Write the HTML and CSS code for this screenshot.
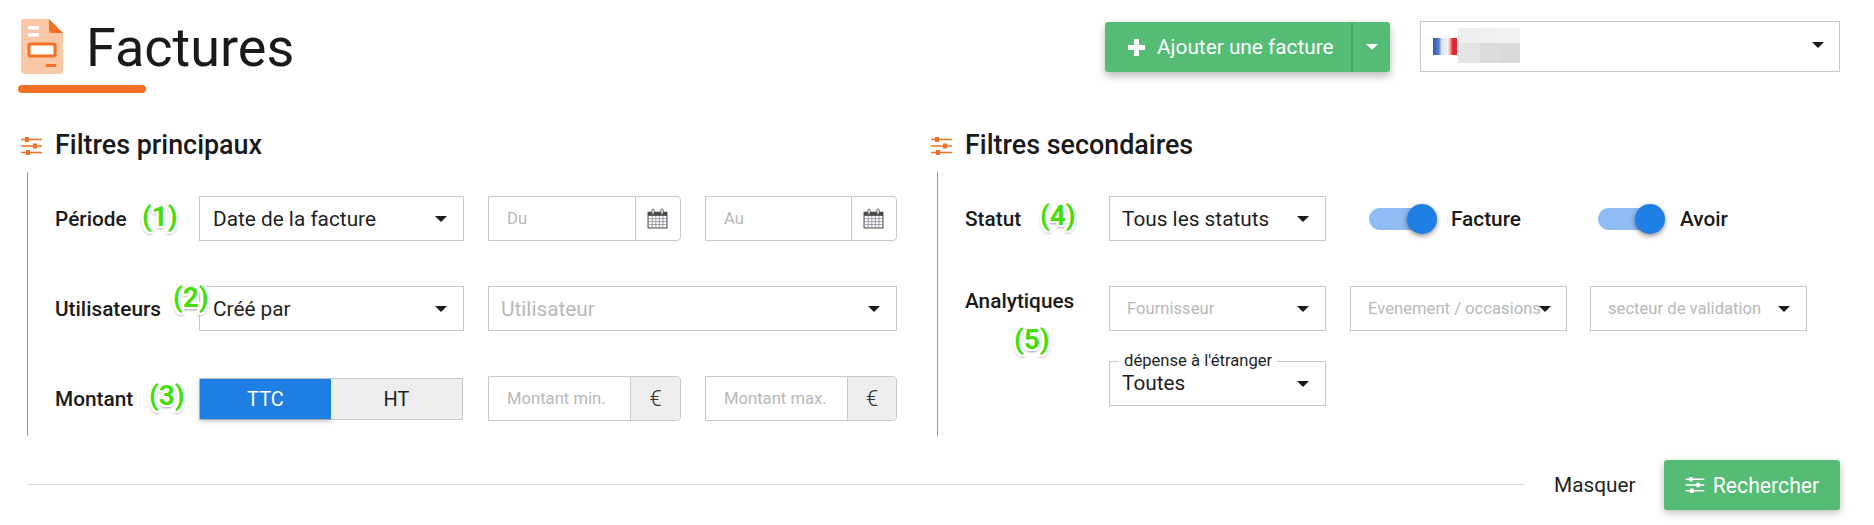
FILE: index.html
```html
<!DOCTYPE html>
<html lang="fr">
<head>
<meta charset="utf-8">
<title>Factures</title>
<link rel="stylesheet" href="styles.css">
</head>
<body>
<svg class="defs" width="0" height="0" aria-hidden="true">
  <defs>
    <symbol id="sliders" viewBox="0 0 21 18">
      <path d="M0 2.5h21M0 9h21M0 15.5h21" stroke="currentColor" stroke-width="1.5" fill="none"/>
      <rect x="4" y="0" width="4" height="5"/>
      <rect x="12" y="6.5" width="4" height="5"/>
      <rect x="5" y="13" width="4" height="5"/>
    </symbol>
    <symbol id="calendar" viewBox="0 0 20 20">
      <path d="M1 3.5h18a.5.5 0 0 1 .5.5v15a.5.5 0 0 1-.5.5H1a.5.5 0 0 1-.5-.5V4a.5.5 0 0 1 .5-.5z" fill="#4a4a4a"/>
      <rect x="1.5" y="7.5" width="17" height="11" fill="#fff"/>
      <path d="M1.5 10.2h17M1.5 13h17M1.5 15.8h17M5 7.5v11M8.4 7.5v11M11.8 7.5v11M15.2 7.5v11" stroke="#8a8f9c" stroke-width=".8" fill="none"/>
      <rect x="4.6" y="1" width="2.2" height="5" rx="1.1" fill="#fff" stroke="#4a4a4a" stroke-width=".8"/>
      <rect x="13.2" y="1" width="2.2" height="5" rx="1.1" fill="#fff" stroke="#4a4a4a" stroke-width=".8"/>
    </symbol>
  </defs>
</svg>

<header class="top">
  <div class="brand">
    <div class="brand-row">
      <svg class="doc" viewBox="0 0 42 55" aria-hidden="true">
        <path d="M3 0h25l14 14v37a4 4 0 0 1-4 4H4a4 4 0 0 1-4-4V3a3 3 0 0 1 3-3z" fill="#fac7a7"/>
        <path d="M28 0l14 14H31a3 3 0 0 1-3-3z" fill="#f37124"/>
        <rect x="7" y="7" width="11" height="3.5" rx=".5" fill="#fff"/>
        <rect x="7" y="14" width="11" height="3.5" rx=".5" fill="#fff"/>
        <rect x="8" y="25" width="26" height="12" rx="1.5" fill="#fff" stroke="#f37124" stroke-width="3"/>
        <rect x="25" y="45" width="10" height="3" fill="#f37124"/>
      </svg>
      <h1 class="title">Factures</h1>
    </div>
    <div class="brand-bar"></div>
  </div>
  <div class="top-actions">
    <div class="btn-group">
      <button class="btn btn-main" type="button"><span class="plus"></span>Ajouter une facture</button>
      <button class="btn btn-caret" type="button"><span class="caret caret-white"></span></button>
    </div>
    <div class="company">
      <span class="flag"></span>
      <svg class="redacted" viewBox="0 0 62 35" preserveAspectRatio="none" aria-hidden="true">
        <rect width="22" height="15" fill="#eeeeee"/>
        <rect x="22" width="20" height="15" fill="#f0f1f1"/>
        <rect x="42" width="20" height="15" fill="#f1f2f2"/>
        <rect y="15" width="22" height="20" fill="#e4e4e4"/>
        <rect x="22" y="15" width="20" height="20" fill="#dcdcdc"/>
        <rect x="42" y="15" width="20" height="20" fill="#dadada"/>
      </svg>
      <span class="caret company-caret"></span>
    </div>
  </div>
</header>

<main class="filters">
  <section class="panel panel-left">
    <h2 class="panel-title"><svg class="sliders" aria-hidden="true"><use href="#sliders"/></svg>Filtres principaux</h2>
    <div class="panel-body">
      <div class="row">
        <div class="label">Période<span class="mark mark-1">(1)</span></div>
        <div class="select w-select"><span>Date de la facture</span><span class="caret"></span></div>
        <div class="input-group w-input">
          <span class="ph">Du</span>
          <span class="addon"><svg class="cal" aria-hidden="true"><use href="#calendar"/></svg></span>
        </div>
        <div class="input-group w-input">
          <span class="ph">Au</span>
          <span class="addon"><svg class="cal" aria-hidden="true"><use href="#calendar"/></svg></span>
        </div>
      </div>
      <div class="row">
        <div class="label">Utilisateurs<span class="mark mark-2">(2)</span></div>
        <div class="select w-select"><span>Créé par</span><span class="caret"></span></div>
        <div class="select w-wide"><span class="ph-big">Utilisateur</span><span class="caret"></span></div>
      </div>
      <div class="row">
        <div class="label">Montant<span class="mark mark-3">(3)</span></div>
        <div class="segmented w-select">
          <span class="seg seg-on">TTC</span>
          <span class="seg">HT</span>
        </div>
        <div class="input-group w-input">
          <span class="ph">Montant min.</span>
          <span class="addon addon-grey">€</span>
        </div>
        <div class="input-group w-input">
          <span class="ph">Montant max.</span>
          <span class="addon addon-grey">€</span>
        </div>
      </div>
    </div>
  </section>

  <section class="panel panel-right">
    <h2 class="panel-title"><svg class="sliders" aria-hidden="true"><use href="#sliders"/></svg>Filtres secondaires</h2>
    <div class="panel-body">
      <div class="row">
        <div class="label">Statut<span class="mark mark-4">(4)</span></div>
        <div class="select w-select text-select"><span>Tous les statuts</span><span class="caret"></span></div>
        <div class="toggle toggle-a"><span class="track"><span class="knob"></span></span><span class="toggle-label">Facture</span></div>
        <div class="toggle toggle-b"><span class="track"><span class="knob"></span></span><span class="toggle-label">Avoir</span></div>
      </div>
      <div class="row row-top">
        <div class="label label-top">Analytiques<span class="mark mark-5">(5)</span></div>
        <div class="wrap">
          <div class="select w-select ph-select"><span class="ph-small">Fournisseur</span><span class="caret"></span></div>
          <div class="select w-select ph-select tight"><span class="ph-small">Evenement / occasions</span><span class="caret"></span></div>
          <div class="select w-select ph-select"><span class="ph-small">secteur de validation</span><span class="caret"></span></div>
          <div class="select w-select text-select legend-select">
            <span class="legend">dépense à l'étranger</span>
            <span class="legend-value">Toutes</span><span class="caret"></span>
          </div>
        </div>
      </div>
    </div>
  </section>
</main>

<footer class="foot">
  <div class="rule"></div>
  <span class="hide-link">Masquer</span>
  <button class="btn btn-search" type="button"><svg class="sliders sliders-white" aria-hidden="true"><use href="#sliders"/></svg>Rechercher</button>
</footer>
</body>
</html>
```
FILE: styles.css
```css
* { box-sizing: border-box; }
html, body { margin: 0; padding: 0; }
body {
  width: 1874px;
  height: 525px;
  overflow: hidden;
  background: #fff;
  color: #1a1a1a;
  font-family: Roboto, "Liberation Sans", sans-serif;
  font-size: 20.8px;
  position: relative;
}
.defs { position: absolute; }

/* Header */
.top {
  display: flex;
  justify-content: space-between;
  padding: 19px 34px 0 18px;
  height: 93px;
}
.brand { display: flex; flex-direction: column; }
.brand-row { display: flex; align-items: flex-start; padding-left: 3px; height: 66px; }
.doc { width: 42px; height: 55px; flex: none; }
.title {
  margin: -3px 0 0 23px;
  font-size: 54px;
  font-weight: 400;
  line-height: 64px;
  color: #1a1a1a;
}
.brand-bar { width: 128px; height: 8px; border-radius: 4px; background: #f37124; }
.top-actions { display: flex; gap: 30px; padding-top: 2px; align-items: flex-start; }

.btn {
  border: 0;
  color: #fff;
  background: #55bc76;
  font-family: inherit;
  cursor: pointer;
}
.btn-group {
  display: flex;
  height: 50px;
  margin-top: 1px;
  border-radius: 3px;
  box-shadow: 0 4px 8px rgba(0,0,0,.28);
}
.btn-main {
  width: 248px;
  padding: 0 0 0 23px;
  display: flex;
  align-items: center;
  font-size: 20.8px;
  border-radius: 3px 0 0 3px;
  border-right: 2px solid #4ba96a;
  white-space: nowrap;
}
.btn-caret { width: 37px; padding: 0; display: flex; align-items: center; justify-content: center; border-radius: 0 3px 3px 0; }
.plus {
  width: 17px;
  height: 17px;
  margin-right: 12px;
  flex: none;
  background:
    linear-gradient(#fff,#fff) center / 17px 5px no-repeat,
    linear-gradient(#fff,#fff) center / 5px 17px no-repeat;
  border-radius: 1px;
}
.caret {
  width: 0;
  height: 0;
  flex: none;
  border-left: 6px solid transparent;
  border-right: 6px solid transparent;
  border-top: 6px solid #1a1a1a;
}
.caret-white { border-top-color: #fff; }

.company {
  width: 420px;
  height: 51px;
  border: 1px solid #c8c8c8;
  display: flex;
  align-items: center;
  padding: 0 15px 0 12px;
}
.flag {
  width: 24px;
  height: 17px;
  flex: none;
  margin-top: -1px;
  background: linear-gradient(90deg, #2f58b4 0, #5b80cc 25%, #dfe3ee 36%, #f2f2f2 62%, #f2b4b4 70%, #e3262a 82%);
}
.redacted { width: 62px; height: 35px; margin: -3px 0 0 1px; flex: none; }
.company-caret { margin-left: auto; margin-top: -4px; }

/* Panels */
.filters { display: grid; grid-template-columns: 910px 1fr; padding: 0 0 0 21px; height: 343px; }
.panel-title {
  margin: 0;
  padding-top: 36px;
  height: 79px;
  display: flex;
  align-items: flex-start;
  font-size: 26.9px;
  font-weight: 500;
  line-height: 32px;
  color: #1a1a1a;
}
.sliders {
  width: 21px;
  height: 18px;
  margin: 8px 13px 0 0;
  flex: none;
  color: #f37124;
  fill: #f37124;
}
.panel-body {
  margin-left: 6px;
  border-left: 1px solid #e8793c;
  padding-left: 27px;
  padding-top: 24px;
  height: 264px;
}
.row { display: flex; align-items: center; height: 45px; margin-bottom: 45px; }
.row:last-child { margin-bottom: 0; }
.row-top { align-items: flex-start; }
.label {
  width: 144px;
  flex: none;
  font-size: 20.8px;
  font-weight: 500;
  position: relative;
  line-height: 24px;
}
.label-top { padding-top: 3px; }

.mark {
  position: absolute;
  z-index: 2;
  font-size: 28px;
  font-weight: 700;
  line-height: 36px;
  color: #44de0d;
  text-shadow:
    2px 0 0 #fff, -2px 0 0 #fff, 0 2px 0 #fff, 0 -2px 0 #fff,
    2px 2px 0 #fff, -2px 2px 0 #fff, 2px -2px 0 #fff, -2px -2px 0 #fff,
    0 3px 2px #bbb, 2px 3px 2px #ccc, -2px 3px 2px #ccc;
  white-space: nowrap;
}
.mark-1 { left: 87px; top: -8px; }
.mark-2 { left: 118px; top: -17px; }
.mark-3 { left: 94px; top: -9px; }
.mark-4 { left: 75px; top: -9px; }
.mark-5 { left: 49px; top: 36px; }

.select {
  height: 45px;
  border: 1px solid #c8c8c8;
  background: #fff;
  display: flex;
  align-items: center;
  justify-content: space-between;
  padding: 0 16px 0 13px;
  font-size: 20.8px;
  flex: none;
  position: relative;
  color: #1f1f1f;
}
.w-select { width: 265px; margin-right: 24px; }
.w-wide { width: 409px; padding-left: 12px; }
.panel-right .w-select { width: 217px; margin-right: 24px; }
.panel-right .tight { margin-right: 23px; }
.text-select { padding-left: 12px; }
.ph-big { color: #b8b8b8; font-size: 20.8px; }
.ph-small { color: #b8b8b8; font-size: 16.64px; white-space: nowrap; }
.ph-select { padding-left: 17px; }
.tight .caret { margin-left: -2px; }
.legend-select { margin-top: 30px; }
.legend-value { margin-top: -2px; }
.legend {
  position: absolute;
  left: 9px;
  top: -11px;
  padding: 0 5px;
  background: #fff;
  font-size: 16.64px;
  line-height: 20px;
  color: #1f1f1f;
  white-space: nowrap;
}
.wrap { display: flex; flex-wrap: wrap; width: 730px; }

.input-group {
  height: 45px;
  display: flex;
  flex: none;
  border: 1px solid #c8c8c8;
  border-radius: 0 4px 4px 0;
  overflow: hidden;
  width: 193px;
}
.w-input { margin-right: 24px; }
.w-input:last-child { margin-right: 0; width: 192px; }
.ph {
  flex: 1;
  display: flex;
  align-items: center;
  padding-left: 18px;
  font-size: 16.64px;
  color: #b8b8b8;
  white-space: nowrap;
}
.addon {
  width: 45px;
  flex: none;
  border-left: 1px solid #c8c8c8;
  display: flex;
  align-items: center;
  justify-content: center;
}
.addon-grey { background: #eeeeee; width: 50px; font-size: 22px; font-weight: 300; color: #333; }
.w-input:last-child .addon-grey { width: 49px; }
.cal { width: 21px; height: 21px; margin: -1px 1px 0 0; }

.segmented { display: flex; height: 42px; border: 1px solid #c8c8c8; width: 264px; flex: none; margin-right: 25px; }
.seg {
  flex: 1;
  display: flex;
  align-items: center;
  justify-content: center;
  background: #eeeeee;
  font-size: 20px;
  color: #1f1f1f;
}
.seg-on { background: #1e7ee4; color: #fff; flex: none; width: 131px; box-shadow: 0 2px 5px rgba(0,0,0,.25); }

.toggle { display: flex; align-items: center; flex: none; }
.toggle-a { width: 229px; margin-left: 19px; }
.track {
  height: 22px;
  border-radius: 11px;
  background: #8ebcf3;
  position: relative;
  display: block;
}
.toggle-a .track { width: 67px; margin-right: 15px; }
.toggle-b .track { width: 66px; margin-right: 16px; }
.knob {
  position: absolute;
  right: -1px;
  top: -4px;
  width: 30px;
  height: 30px;
  border-radius: 50%;
  background: #1e7ee4;
  box-shadow: 0 2px 5px rgba(0,0,0,.45);
}
.toggle-label { font-weight: 500; font-size: 20.8px; }

/* Footer */
.foot { display: flex; align-items: center; padding: 0 34px 0 27px; height: 50px; margin-top: 24px; }
.rule { width: 1498px; height: 1px; margin-bottom: 2px; background: #dcdcdc; flex: none; }
.hide-link { margin-left: 29px; font-size: 20.8px; color: #1f1f1f; }
.btn-search {
  margin-left: auto;
  width: 176px;
  height: 50px;
  border-radius: 3px;
  display: flex;
  align-items: center;
  justify-content: center;
  font-size: 21.2px;
  box-shadow: 0 3px 8px rgba(0,0,0,.25);
}
.sliders-white { color: #fff; fill: #fff; margin: 0 8px 0 0; width: 20px; height: 16px; }
```
